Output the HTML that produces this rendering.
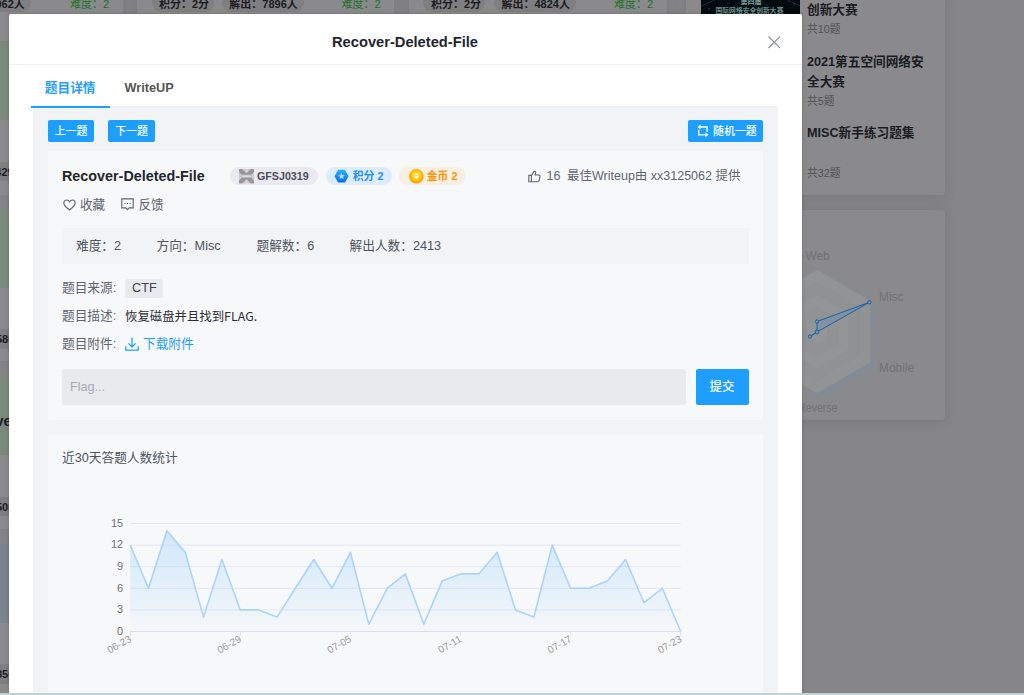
<!DOCTYPE html>
<html lang="zh-CN">
<head>
<meta charset="utf-8">
<title>Recover-Deleted-File</title>
<style>
*{box-sizing:border-box;margin:0;padding:0}
html,body{width:1024px;height:695px;overflow:hidden}
body{position:relative;background:#868688;font-family:"Liberation Sans","Noto Sans CJK SC",sans-serif;font-size:12.7px;color:#5f6673}
.abs{position:absolute}
.t{position:absolute;white-space:nowrap;line-height:1}
/* background page (already dimmed) */
.bgcard{position:absolute;background:#8a8a8c;box-shadow:0 1px 12px 1px rgba(55,57,61,.17)}
.pill{position:absolute;background:#7f7f81;border-radius:10px;height:19px}
.bgt{position:absolute;white-space:nowrap;line-height:1;font-weight:bold;color:#1b1c22;font-size:12.25px}
.st{font-size:11px}
.rt{font-size:12.65px}
.grn{color:#216f2b;font-weight:normal}
/* modal */
.modal{position:absolute;left:9px;top:14px;width:793px;height:700px;background:#fff;border-radius:2px;box-shadow:0 0 4px rgba(0,0,0,.18)}
.hline{position:absolute;left:9px;top:63.5px;width:793px;height:1px;background:#f0f0f0}
.graybox{position:absolute;left:33px;top:106px;width:744.5px;height:600px;background:#f2f3f5}
.card{position:absolute;background:#f7f8fa;border-radius:2px}
.btn{position:absolute;background:#1e9fff;color:#fff;border-radius:2px;font-size:10.9px;font-weight:500;text-align:center;white-space:nowrap}
.badge{position:absolute;height:18px;border-radius:9px;top:167px;font-weight:bold;font-size:10.7px;white-space:nowrap}
.chart{position:absolute;left:0;top:0}
.chart text{font-family:"Liberation Sans",sans-serif}
.yl{font-size:10.9px;fill:#6e7079}
.xl{font-size:10.1px;fill:#9b9b9b}
</style>
</head>
<body>

<!-- ===== dimmed background page ===== -->
<div id="bg">
  <!-- top strip cards -->
  <div class="bgcard" style="left:-10px;top:-10px;width:132.6px;height:30px"></div>
  <div class="bgcard" style="left:137px;top:-10px;width:257px;height:30px"></div>
  <div class="bgcard" style="left:408.8px;top:-10px;width:258px;height:30px"></div>
  <div class="pill" style="left:-20px;top:-7px;width:51px"></div>
  <div class="bgt st" style="left:-10.7px;top:-1px">9062人</div>
  <div class="bgt st grn" style="left:70px;top:-1px">难度：2</div>
  <div class="pill" style="left:152px;top:-7px;width:62px"></div>
  <div class="bgt st" style="left:159px;top:-1px">积分：2分</div>
  <div class="pill" style="left:222px;top:-7px;width:82px"></div>
  <div class="bgt st" style="left:229.3px;top:-1px">解出：7896人</div>
  <div class="bgt st grn" style="left:341.5px;top:-1px">难度：2</div>
  <div class="pill" style="left:423px;top:-7px;width:62px"></div>
  <div class="bgt st" style="left:431px;top:-1px">积分：2分</div>
  <div class="pill" style="left:494px;top:-7px;width:82px"></div>
  <div class="bgt st" style="left:501.5px;top:-1px">解出：4824人</div>
  <div class="bgt st grn" style="left:614px;top:-1px">难度：2</div>
  <!-- left strip -->
  <div class="abs" style="left:0;top:14.5px;width:10px;height:680px;background:#8a8a8c"></div>
  <div class="abs" style="left:0;top:41px;width:10px;height:79px;background:#7b897d"></div>
  <div class="abs" style="left:0;top:162px;width:10px;height:19px;background:#7f7f81"></div>
  <div class="abs" style="left:0;top:195px;width:10px;height:13.5px;background:#838385"></div>
  <div class="abs" style="left:0;top:208.5px;width:10px;height:79px;background:#7b897d"></div>
  <div class="abs" style="left:0;top:329px;width:10px;height:19.5px;background:#7f7f81"></div>
  <div class="abs" style="left:0;top:361px;width:10px;height:15px;background:#838385"></div>
  <div class="abs" style="left:0;top:376px;width:10px;height:79px;background:#7b897d"></div>
  <div class="abs" style="left:0;top:496.5px;width:10px;height:19.5px;background:#7f7f81"></div>
  <div class="abs" style="left:0;top:529px;width:10px;height:14.5px;background:#838385"></div>
  <div class="abs" style="left:0;top:543.5px;width:10px;height:79.5px;background:#7b838d"></div>
  <div class="abs" style="left:0;top:664px;width:10px;height:19.8px;background:#7f7f81"></div>
  <div class="bgt st" style="left:-4.7px;top:167px">4296人</div>
  <div class="bgt st" style="left:-4px;top:333.7px">5806人</div>
  <div class="bgt" style="left:-4.5px;top:414px;font-size:14.5px">ver</div>
  <div class="bgt st" style="left:-4px;top:501.7px">5006人</div>
  <div class="bgt st" style="left:-4px;top:669px">3506人</div>

  <!-- right column -->
  <div class="bgcard" style="left:685.7px;top:-10px;width:259.8px;height:205px;border-radius:0 0 4px 4px"></div>
  <!-- dark thumbnail -->
  <div class="abs" style="left:700.5px;top:0;width:99.5px;height:15px;background:#040b0e;overflow:hidden">
    <svg class="abs" style="left:0;top:0" width="100" height="15" viewBox="0 0 100 15"><path d="M22 15 L46 -4 M78 15 L54 -4 M36 15 L60 -6 M64 15 L40 -6 M0 6 L14 0 M100 6 L86 0" stroke="#0c4450" stroke-width=".8" fill="none" opacity=".8"/><circle cx="8" cy="9" r=".7" fill="#1b6a78"/><circle cx="93" cy="4" r=".7" fill="#1b6a78"/><circle cx="27" cy="3" r=".6" fill="#1b6a78"/></svg>
    <div class="t" style="left:40px;top:-2.5px;font-size:7px;color:#7d9c9a;font-weight:bold">第四届</div>
    <div class="t" style="left:15px;top:8px;font-size:6.8px;color:#6d8c89;font-weight:bold">国际网络安全创新大赛</div>
  </div>

  <div class="bgt rt" style="left:807px;top:3.7px">创新大赛</div>
  <div class="bgt" style="left:807px;top:23.7px;font-weight:normal;font-size:10.8px;color:#505156">共10题</div>
  <div class="bgt rt" style="left:807px;top:55.5px">2021第五空间网络安</div>
  <div class="bgt rt" style="left:807px;top:75.5px">全大赛</div>
  <div class="bgt" style="left:807px;top:95.5px;font-weight:normal;font-size:10.8px;color:#505156">共5题</div>
  <div class="bgt rt" style="left:807px;top:127.3px">MISC新手练习题集</div>
  <div class="bgt" style="left:807px;top:167.5px;font-weight:normal;font-size:10.8px;color:#505156">共32题</div>
  <div class="bgcard" style="left:685.7px;top:210px;width:259.8px;height:209.5px;border-radius:4px"></div>
  <svg class="abs" style="left:0;top:0" width="1024" height="695" viewBox="0 0 1024 695">
    <defs>
      <filter id="bl" x="-30%" y="-30%" width="160%" height="160%"><feGaussianBlur stdDeviation="4.5"/></filter>
    </defs>
    <g transform="translate(817,331.5)">
      <polygon points="0.00,-61.50 53.26,-30.75 53.26,30.75 0.00,61.50 -53.26,30.75 -53.26,-30.75" fill="#788ca6" opacity=".55" filter="url(#bl)" transform="translate(2.5,3.5)"/>
      <polygon points="0.00,-61.50 53.26,-30.75 53.26,30.75 0.00,61.50 -53.26,30.75 -53.26,-30.75" fill="#929395" stroke="#8a919c" stroke-opacity=".3" stroke-width="1"/>
      <polygon points="0.00,-49.20 42.61,-24.60 42.61,24.60 0.00,49.20 -42.61,24.60 -42.61,-24.60" fill="#909193" stroke="#8a919c" stroke-opacity=".3" stroke-width="1"/>
      <polygon points="0.00,-36.90 31.96,-18.45 31.96,18.45 0.00,36.90 -31.96,18.45 -31.96,-18.45" fill="#939496" stroke="#8a919c" stroke-opacity=".3" stroke-width="1"/>
      <polygon points="0.00,-24.60 21.30,-12.30 21.30,12.30 0.00,24.60 -21.30,12.30 -21.30,-12.30" fill="#919294" stroke="#8a919c" stroke-opacity=".3" stroke-width="1"/>
      <polygon points="0.00,-12.30 10.65,-6.15 10.65,6.15 0.00,12.30 -10.65,6.15 -10.65,-6.15" fill="#949597" stroke="#8a919c" stroke-opacity=".3" stroke-width="1"/>
    </g>
    <polygon points="869.3,302.3 817,321.5 817,332 810,336.5 817,332" fill="#5f8fbf" fill-opacity=".35" stroke="#1a63a8" stroke-width="1" stroke-linejoin="round"/>
    <g fill="#8a9097" stroke="#1a63a8" stroke-width="1">
      <circle cx="869.3" cy="302.3" r="1.7"/><circle cx="817" cy="321.5" r="1.7"/><circle cx="817" cy="332" r="1.9"/><circle cx="810" cy="336.5" r="1.7"/>
    </g>
    <g font-family="Liberation Sans, sans-serif" font-size="11.9" fill="#707176">
      <text x="805.5" y="259.8">Web</text>
      <text x="879" y="300.5">Misc</text>
      <text x="879" y="371.6">Mobile</text>
      <text x="798.2" y="411.8" textLength="39.3" lengthAdjust="spacingAndGlyphs">Reverse</text>
    </g>
  </svg>
</div>

<!-- ===== modal ===== -->
<div class="modal"></div>
<div class="hline"></div>
<div class="t" style="left:332px;top:34.5px;font-size:14.68px;font-weight:bold;color:#23262e">Recover-Deleted-File</div>
<svg class="abs" style="left:767.5px;top:36px" width="12.5" height="12.5" viewBox="0 0 12.5 12.5"><path d="M0.5 0.5 L12 12 M12 0.5 L0.5 12" stroke="#8893a0" stroke-width="1.1" fill="none"/></svg>

<!-- tabs -->
<div class="t" style="left:44.8px;top:81.5px;font-weight:bold;color:#1e9fff">题目详情</div>
<div class="t" style="left:124.5px;top:81.5px;font-weight:bold;color:#555">WriteUP</div>
<div class="graybox"></div>
<div class="abs" style="left:31px;top:106px;width:79px;height:2px;background:#1e9fff"></div>

<!-- buttons -->
<div class="btn" style="left:48px;top:120px;width:46px;height:22px;line-height:23.6px">上一题</div>
<div class="btn" style="left:108px;top:120px;width:47px;height:22px;line-height:23.6px">下一题</div>
<div class="btn" style="left:688px;top:120px;width:75px;height:22px;line-height:23.6px;text-align:left;padding-left:25px">随机一题</div>
<svg class="abs" style="left:696.5px;top:124px" width="12" height="14" viewBox="0 0 12 14" fill="none" stroke="#fff" stroke-width="1.35"><path d="M2.6 3 H10.1 V7.8"/><path d="M1.7 5.8 V10.8 H9.2"/><path d="M0.5 3 L3.5 0.5 V5.5 Z M11.5 10.8 L8.5 8.3 V13.3 Z" fill="#fff" stroke="none"/></svg>

<!-- card 1 -->
<div class="card" style="left:47.5px;top:150.5px;width:715.5px;height:269px"></div>
<div class="t" style="left:62px;top:169px;font-size:14.35px;font-weight:bold;color:#23262e">Recover-Deleted-File</div>

<div class="badge" style="left:230px;width:88px;background:#e9e9ef;color:#4b4f5c;line-height:18px;padding-left:27px">GFSJ0319</div>
<svg class="abs" style="left:239px;top:169px" width="15" height="14.5" viewBox="0 0 15 14.5"><defs><filter id="ib" x="-10%" y="-10%" width="120%" height="120%"><feGaussianBlur stdDeviation=".7"/></filter><clipPath id="ic"><rect width="15" height="14.5"/></clipPath></defs><g clip-path="url(#ic)"><g filter="url(#ib)"><rect x="-2" y="-2" width="19" height="18.5" fill="#c9c9cd"/><path d="M0 0 L15 14.5 M15 0 L0 14.5" stroke="#97979b" stroke-width="4.2" fill="none"/><path d="M7.5 -1 V3 M7.5 11.5 V16" stroke="#d4d4d8" stroke-width="3"/><rect x="2.5" y="5.6" width="10" height="3.4" fill="#b9b9bd"/><rect x="3.2" y="6.4" width="8.6" height="1.6" fill="#dedee2"/></g></g></svg>
<div class="badge" style="left:326px;width:66px;background:#ddecfb;color:#1e90ff;line-height:18px;padding-left:26.8px;font-size:10.8px">积分 2</div>
<svg class="abs" style="left:334px;top:169px" width="15" height="14" viewBox="0 0 15 14"><defs><linearGradient id="hg" x1="0" y1="0" x2="0" y2="1"><stop offset="0" stop-color="#2cb4ff"/><stop offset="1" stop-color="#0a68dc"/></linearGradient></defs><polygon points="0.5,7.2 4,0.8 11,0.8 14.5,7.2 11,13.6 4,13.6" fill="url(#hg)"/><polygon points="7.5,3.9 8.5,6 10.8,6.2 9.1,7.8 9.6,10.1 7.5,8.9 5.4,10.1 5.9,7.8 4.2,6.2 6.5,6" fill="#a9d9ff"/></svg>
<div class="badge" style="left:399px;width:67px;background:#f9eee2;color:#ff9500;line-height:18px;padding-left:27.8px;font-size:10.8px">金币 2</div>
<svg class="abs" style="left:408.5px;top:168.8px" width="15" height="15" viewBox="0 0 15 15"><defs><radialGradient id="cg" cx=".5" cy=".45" r=".5"><stop offset="0" stop-color="#ffe14a"/><stop offset=".62" stop-color="#ffd012"/><stop offset=".78" stop-color="#ffb400"/><stop offset="1" stop-color="#ff9f00"/></radialGradient></defs><circle cx="7.4" cy="7.3" r="7.2" fill="url(#cg)"/><path d="M4.3 6.2 L5.6 4.8 H9.2 L10.5 6.2 L7.4 10 Z" fill="#fff6d8"/><path d="M4.6 6.4 H10.2" stroke="#ffc61a" stroke-width=".7"/></svg>

<!-- like / writeup -->
<svg class="abs" style="left:528px;top:169.5px" width="13" height="13" viewBox="0 0 13 13" fill="none" stroke="#5f6673" stroke-width="1.1" stroke-linejoin="round"><path d="M0.8 5.4 H3.4 V11.8 H0.8 Z"/><path d="M3.4 5.6 L6 1.2 C7.6 1 7.9 2.4 7.5 3.4 L7 5 H10.6 C11.8 5 12.2 5.8 12 6.6 L11 10.8 C10.8 11.5 10.3 11.8 9.6 11.8 H3.4"/></svg>
<div class="t" style="left:546.5px;top:170px;font-size:12.5px">16</div>
<div class="t" style="left:567px;top:170px;font-size:12.5px">最佳Writeup由 xx3125062 提供</div>

<!-- fav / feedback -->
<svg class="abs" style="left:62.5px;top:198.5px" width="13" height="12" viewBox="0 0 13 12" fill="none" stroke="#5f6673" stroke-width="1.15"><path d="M6.5 11 C3 8.4 0.8 6.4 0.8 4 C0.8 2.2 2.1 1 3.6 1 C4.8 1 5.9 1.7 6.5 2.8 C7.1 1.7 8.2 1 9.4 1 C10.9 1 12.2 2.2 12.2 4 C12.2 6.4 10 8.4 6.5 11 Z"/></svg>
<div class="t" style="left:80px;top:198.7px;font-size:12.6px">收藏</div>
<svg class="abs" style="left:121px;top:198px" width="13" height="13" viewBox="0 0 13 13" fill="none" stroke="#5f6673" stroke-width="1.15"><path d="M0.8 0.8 H12.2 V9.8 H8.2 L6.5 11.6 L4.8 9.8 H0.8 Z"/><path d="M3.3 5.5 h1.1 M5.95 5.5 h1.1 M8.6 5.5 h1.1" stroke-width="1.2"/></svg>
<div class="t" style="left:138.5px;top:198.7px;font-size:12.6px">反馈</div>

<!-- stats bar -->
<div class="abs" style="left:62px;top:228px;width:686.5px;height:36px;background:#f2f3f5;border-radius:2px"></div>
<div class="t" style="left:76px;top:240px;color:#4e5562">难度：2</div>
<div class="t" style="left:156.5px;top:240px;color:#4e5562">方向：Misc</div>
<div class="t" style="left:256.5px;top:240px;color:#4e5562">题解数：6</div>
<div class="t" style="left:349.5px;top:240px;color:#4e5562">解出人数：2413</div>

<!-- meta rows -->
<div class="t" style="left:62px;top:282.2px">题目来源:</div>
<div class="abs" style="left:124.5px;top:278.6px;width:38.7px;height:19.8px;background:#e9eaee;border-radius:2px"></div>
<div class="t" style="left:132px;top:282px;color:#3f444e">CTF</div>
<div class="t" style="left:62px;top:309.8px">题目描述:</div>
<div class="t" style="left:125px;top:309.9px;font-family:'Noto Sans CJK SC',sans-serif;color:#2b2e36;font-size:12.4px">恢复磁盘并且找到FLAG.</div>
<div class="t" style="left:62px;top:337.9px">题目附件:</div>
<svg class="abs" style="left:124.5px;top:337px" width="14" height="15" viewBox="0 0 14 15" fill="none" stroke="#1e9fff" stroke-width="1.25"><path d="M7 0.6 V9.8 M3.4 6.4 L7 10 L10.6 6.4"/><path d="M0.8 9.2 V13.2 H13.2 V9.2"/></svg>
<div class="t" style="left:143px;top:337.9px;color:#1e9fff">下载附件</div>

<!-- input + submit -->
<div class="abs" style="left:62px;top:369px;width:624px;height:35.5px;background:#e9eaee;border-radius:2px"></div>
<div class="t" style="left:70px;top:380.8px;color:#a6a9b3;font-size:12.6px">Flag...</div>
<div class="btn" style="left:695.5px;top:369px;width:53px;height:36px;line-height:37px;font-size:12.4px;font-weight:500">提交</div>

<!-- card 2 : chart -->
<div class="card" style="left:47.5px;top:434px;width:715.5px;height:300px"></div>
<div class="t" style="left:62px;top:452.4px;font-size:12.7px;color:#4e5562">近30天答题人数统计</div>
<svg class="chart" width="1024" height="695" viewBox="0 0 1024 695">
<defs><linearGradient id="ag" x1="0" y1="0" x2="0" y2="1"><stop offset="0" stop-color="#1e9fff" stop-opacity=".18"/><stop offset="1" stop-color="#1e9fff" stop-opacity=".01"/></linearGradient></defs>
<line x1="130.2" x2="680.7" y1="609.9" y2="609.9" stroke="#e3e7f3" stroke-width="1"/><line x1="130.2" x2="680.7" y1="588.3" y2="588.3" stroke="#e3e7f3" stroke-width="1"/><line x1="130.2" x2="680.7" y1="566.7" y2="566.7" stroke="#e3e7f3" stroke-width="1"/><line x1="130.2" x2="680.7" y1="545.1" y2="545.1" stroke="#e3e7f3" stroke-width="1"/><line x1="130.2" x2="680.7" y1="523.5" y2="523.5" stroke="#e3e7f3" stroke-width="1"/><line x1="130.2" x2="680.7" y1="631.5" y2="631.5" stroke="#d9deee" stroke-width="1"/>
<path d="M130.2,631.5 L130.2,545.1 L148.5,588.3 L166.9,530.7 L185.2,552.3 L203.6,617.1 L221.9,559.5 L240.3,609.9 L258.6,609.9 L277.0,617.1 L295.4,588.3 L313.7,559.5 L332.0,588.3 L350.4,552.3 L368.8,624.3 L387.1,588.3 L405.4,573.9 L423.8,624.3 L442.1,581.1 L460.5,573.9 L478.8,573.9 L497.2,552.3 L515.5,609.9 L533.9,617.1 L552.2,545.1 L570.6,588.3 L589.0,588.3 L607.3,581.1 L625.6,559.5 L644.0,602.7 L662.3,588.3 L680.7,631.5 L680.7,631.5 Z" fill="url(#ag)"/>
<polyline points="130.2,545.1 148.5,588.3 166.9,530.7 185.2,552.3 203.6,617.1 221.9,559.5 240.3,609.9 258.6,609.9 277.0,617.1 295.4,588.3 313.7,559.5 332.0,588.3 350.4,552.3 368.8,624.3 387.1,588.3 405.4,573.9 423.8,624.3 442.1,581.1 460.5,573.9 478.8,573.9 497.2,552.3 515.5,609.9 533.9,617.1 552.2,545.1 570.6,588.3 589.0,588.3 607.3,581.1 625.6,559.5 644.0,602.7 662.3,588.3 680.7,631.5" fill="none" stroke="#aad4fd" stroke-width="1.6" stroke-linejoin="round"/>
<text x="123" y="634.8" text-anchor="end" class="yl">0</text><text x="123" y="613.2" text-anchor="end" class="yl">3</text><text x="123" y="591.6" text-anchor="end" class="yl">6</text><text x="123" y="570.0" text-anchor="end" class="yl">9</text><text x="123" y="548.4" text-anchor="end" class="yl">12</text><text x="123" y="526.8" text-anchor="end" class="yl">15</text><line x1="130.2" x2="130.2" y1="631.5" y2="635.5" stroke="#d9deee" stroke-width="1"/><text transform="translate(132.0,640.9) rotate(-30)" text-anchor="end" class="xl">06-23</text><line x1="240.3" x2="240.3" y1="631.5" y2="635.5" stroke="#d9deee" stroke-width="1"/><text transform="translate(242.1,640.9) rotate(-30)" text-anchor="end" class="xl">06-29</text><line x1="350.4" x2="350.4" y1="631.5" y2="635.5" stroke="#d9deee" stroke-width="1"/><text transform="translate(352.2,640.9) rotate(-30)" text-anchor="end" class="xl">07-05</text><line x1="460.5" x2="460.5" y1="631.5" y2="635.5" stroke="#d9deee" stroke-width="1"/><text transform="translate(462.3,640.9) rotate(-30)" text-anchor="end" class="xl">07-11</text><line x1="570.6" x2="570.6" y1="631.5" y2="635.5" stroke="#d9deee" stroke-width="1"/><text transform="translate(572.4,640.9) rotate(-30)" text-anchor="end" class="xl">07-17</text><line x1="680.7" x2="680.7" y1="631.5" y2="635.5" stroke="#d9deee" stroke-width="1"/><text transform="translate(682.5,640.9) rotate(-30)" text-anchor="end" class="xl">07-23</text>
</svg>

<!-- bottom strip -->
<div class="abs" style="left:0;top:693px;width:1024px;height:2px;background:#bdd3d8"></div>
</body>
</html>
